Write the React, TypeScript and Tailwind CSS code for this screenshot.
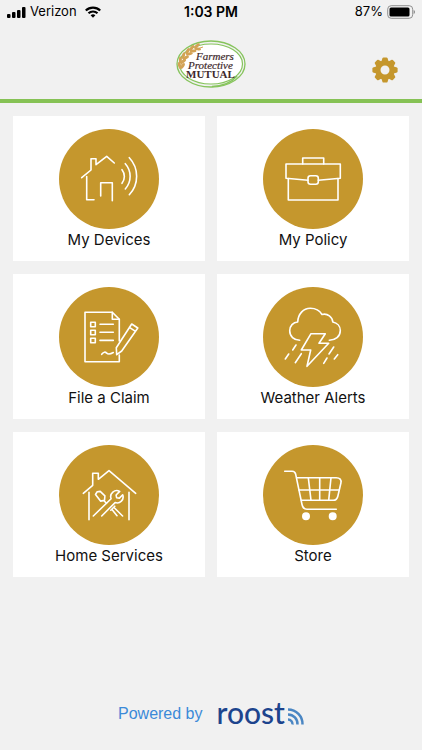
import type { ReactNode } from "react";

type Tile = { label: string; icon: ReactNode };

function DevicesIcon() {
  return (
    <>
      <path d="M22.7 48.7L32 41V29.7h5v6L47.7 27.3l7.6 6.7" />
      <path d="M27.7 47.5v23.2H35" />
      <path d="M41.7 67V53.7h11.6v18" />
      <path d="M63 40.7a11 11 0 0 1 0 13.6M66.3 34.7a19 19 0 0 1 0 25.3M70.3 28.7a27 27 0 0 1 0 37" />
    </>
  );
}

function PolicyIcon() {
  return (
    <>
      <path d="M39.7 35v-6h21v6" />
      <path d="M45 51.3L23 49.3V35h54.3v14.3l-22 2" />
      <path d="M25.3 49.6V71H75V49.6" />
      <rect x="45" y="46.8" width="10.3" height="8.4" rx="2.5" />
    </>
  );
}

function ClaimIcon() {
  return (
    <>
      <path d="M60.3 54V32.3l-7-7H26v49.4h34.3V68" />
      <path d="M53.3 25.3v7h7" />
      <path d="M31.7 35.2h4.6v4.6h-4.6zM31.7 43.2h4.6v4.6h-4.6zM31.7 51.2h4.6v4.6h-4.6z" />
      <path d="M41 37.3h13.3M41 45.3h13.3M41 53.4h13.3" />
      <path d="M72.7 37l6.1 4-16.1 23-5 3.7-.4-7zM70.4 40.3l6.1 4" />
      <path d="M42.7 67.3c2-2.6 3.6-2.6 5-1.2s3 1.4 6.6-.6" />
    </>
  );
}

function WeatherIcon() {
  return (
    <>
      <path d="M36.7 53.3c-5.8 0-10-4-10-9.5 0-5 3.5-8.6 8-8.8.4-8 5.6-13.7 12.6-13.7 5 0 9.5 2.4 11.7 6.2 5.6-1.5 10.5 2.5 10.8 7.5 4.5.8 7.5 4.3 7.5 8.5 0 6-5 9.8-11 9.8" />
      <path d="M48 46.7h14.3L56 56.3h9.7L44 79.3 47.7 63h-9.4z" />
      <path d="M33 58l-3.3 5M25.7 67l-3.4 5M38.3 66.7l-6 9M70.7 60L66 67M64 71l-3.3 5.3M74.7 67.7L71.3 72" />
    </>
  );
}

function HomeServicesIcon() {
  return (
    <>
      <path d="M24.3 48.3l9.4-8v-12h5.6v6L50 25.7l26.7 22.6" />
      <path d="M30 47.3v27.4M70 47.3v27.4" />
      <path d="M34.3 71l17.8-17.3a6 6 0 0 1 8.6-7.3l-3.6 3.6.5 2.7 2.8.4 3.3-3.3a6 6 0 0 1-7.6 7.8L42.7 71" />
      <path d="M36.5 49.5l1.7-2.7 3-.4 4.7 4.4-.4 4.6-4 .7zM44.8 55.6l2.7 2.7" />
      <path d="M51.8 65.2l4-4M55.8 63.3L63.6 71M52.8 64.3l5.2 6.4" />
    </>
  );
}

function StoreIcon() {
  return (
    <>
      <path d="M21.7 26.3h7.5c2 0 3 1 3.5 3L39 59.5c.8 3.5 2 4.8 5 4.8h29.3" />
      <path d="M33.7 32.7h39.6c3.5 0 5.3 2 4.6 5.3l-3 13c-.6 3-2 4.3-4.8 4.3H38.3" />
      <path d="M36 45h40M45.3 32.7L48 55.3M56.7 32.7v22.6M68 32.7l-2.3 22.6" />
      <circle cx="43" cy="71.3" r="3.2" fill="currentColor" />
      <circle cx="69.7" cy="71.3" r="3.2" fill="currentColor" />
    </>
  );
}

const TILES: Tile[] = [
  { label: "My Devices", icon: <DevicesIcon /> },
  { label: "My Policy", icon: <PolicyIcon /> },
  { label: "File a Claim", icon: <ClaimIcon /> },
  { label: "Weather Alerts", icon: <WeatherIcon /> },
  { label: "Home Services", icon: <HomeServicesIcon /> },
  { label: "Store", icon: <StoreIcon /> },
];

const TEETH = [0, 45, 90, 135, 180, 225, 270, 315];

// Wheat kernels run along the upper left of the logo's oval: x, y, angle.
const KERNELS = [
  [5, 25, -80],
  [6, 20, -65],
  [9, 16, -50],
  [13, 12, -38],
  [17, 9, -26],
  [22, 7, -15],
];

function StatusBar() {
  return (
    <div className="grid h-6 grid-cols-3 items-center px-[7px] text-[13px] text-black">
      <div className="flex items-center gap-1">
        <svg width="19" height="11" viewBox="0 0 19 11" aria-hidden>
          <rect x="0" y="7" width="3.5" height="4" rx="1" />
          <rect x="5" y="5" width="3.5" height="6" rx="1" />
          <rect x="10" y="3" width="3.5" height="8" rx="1" />
          <rect x="15" y="0" width="3.5" height="11" rx="1" />
        </svg>
        <span>Verizon</span>
        <svg className="ml-1" width="16" height="12" viewBox="0 0 16 12" fill="none" stroke="currentColor" strokeWidth="2.2" aria-hidden>
          <path d="M.8 4.5a10.3 10.3 0 0 1 14.4 0M3.5 7.3a6.5 6.5 0 0 1 9 0" />
          <path d="M8 11.8L5.6 9.3a3.5 3.5 0 0 1 4.8 0z" fill="currentColor" stroke="none" />
        </svg>
      </div>
      <div className="text-center text-sm font-semibold">1:03 PM</div>
      <div className="flex items-center justify-end gap-1">
        <span>87%</span>
        <svg width="28" height="14" viewBox="0 0 28 14" aria-hidden>
          <rect x=".7" y=".7" width="25" height="12.6" rx="3.5" fill="none" stroke="#8f8f8f" />
          <rect x="2.5" y="2.5" width="20" height="9" rx="1.5" />
          <path d="M26.6 5v4c.9-.4 1.4-1.1 1.4-2s-.5-1.6-1.4-2z" fill="#8f8f8f" />
        </svg>
      </div>
    </div>
  );
}

function MutualLogo() {
  return (
    <svg width="70" height="48" viewBox="0 0 70 48" role="img" aria-label="Farmers Protective Mutual">
      <ellipse cx="35" cy="24" rx="31.5" ry="20" fill="#fff" />
      <g fill="none" stroke="#86c45c">
        <ellipse cx="35" cy="24" rx="34" ry="23" strokeWidth="1.3" />
        <ellipse cx="35" cy="24" rx="31.5" ry="20" strokeWidth="1.2" />
        <path d="M61 36C56 42 47 46 36 46.5" strokeWidth="1.5" />
      </g>
      <path d="M4 29C6 18 13 11 27 7" fill="none" stroke="#d3a355" />
      <g fill="#d3a355">
        {KERNELS.map(([x, y, angle]) => (
          <g key={angle} transform={`translate(${x} ${y}) rotate(${angle})`}>
            <ellipse cx="0" cy="-1.6" rx="3.4" ry="1.5" transform="rotate(-25)" />
            <ellipse cx="0" cy="1.9" rx="3.4" ry="1.5" transform="rotate(25)" />
          </g>
        ))}
      </g>
      <g fill="#40292b" fontFamily="Liberation Serif, serif">
        <text x="20" y="20" fontSize="11" fontStyle="italic" stroke="#40292b" strokeWidth=".2">Farmers</text>
        <text x="12" y="29" fontSize="11" fontStyle="italic" stroke="#40292b" strokeWidth=".2">Protective</text>
        <text x="10" y="38" fontSize="11" fontWeight="700">MUTUAL</text>
      </g>
    </svg>
  );
}

function GearIcon() {
  return (
    <svg width="26" height="26" viewBox="0 0 26 26" fill="#c5972d" aria-hidden>
      <circle cx="13" cy="13" r="7" fill="none" stroke="#c5972d" strokeWidth="5" />
      {TEETH.map((angle) => (
        <path key={angle} d="M9.2 5l1.3-4q.3-.6 1-.6h3q.7 0 1 .6l1.3 4z" transform={`rotate(${angle} 13 13)`} />
      ))}
    </svg>
  );
}

function RoostLogo() {
  return (
    <a href="#roost" className="flex items-center gap-0.5 pb-1 text-[#1d448d]">
      <span className="font-['Lato',sans-serif] text-[30px] leading-8 font-medium">roost</span>
      <svg className="mt-2" width="17" height="17" viewBox="0 0 17 17" fill="none" stroke="#4a86c3" strokeWidth="2.5" aria-hidden>
        <path d="M1 1.5a14.5 14.5 0 0 1 14.5 15" />
        <path d="M1 6.5a9.5 9.5 0 0 1 9.5 10" />
        <path d="M1 11.5a4.5 4.5 0 0 1 4.5 5" />
      </svg>
    </a>
  );
}

export default function App() {
  return (
    <div className="flex min-h-screen flex-col bg-[#f1f1f1] font-['Inter',sans-serif]">
      <StatusBar />
      <header className="grid grid-cols-[1fr_auto_1fr] items-center border-b-4 border-[#86c255] px-6 pt-4 pb-[11px]">
        <div />
        <MutualLogo />
        <button type="button" aria-label="Settings" className="mt-3 justify-self-end">
          <GearIcon />
        </button>
      </header>

      <main className="grid grid-cols-2 gap-x-3 gap-y-[13px] px-[13px] pt-[13px]">
        {TILES.map((tile) => (
          <button key={tile.label} type="button" className="flex flex-col items-center bg-white pt-[13px] pb-[11px]">
            <span className="size-[100px] rounded-full bg-[#c5972d] text-white">
              <svg
                viewBox="0 0 100 100"
                fill="none"
                stroke="currentColor"
                strokeWidth="1.6"
                strokeLinecap="round"
                strokeLinejoin="round"
                aria-hidden
              >
                {tile.icon}
              </svg>
            </span>
            <span className="text-[15px] leading-[21px] text-[#111]">{tile.label}</span>
          </button>
        ))}
      </main>

      <footer className="mt-auto flex items-center justify-center gap-[14px] pb-[18px]">
        <span className="font-['Liberation_Sans',sans-serif] text-base text-[#3b8ad8]">Powered by</span>
        <RoostLogo />
      </footer>
    </div>
  );
}
